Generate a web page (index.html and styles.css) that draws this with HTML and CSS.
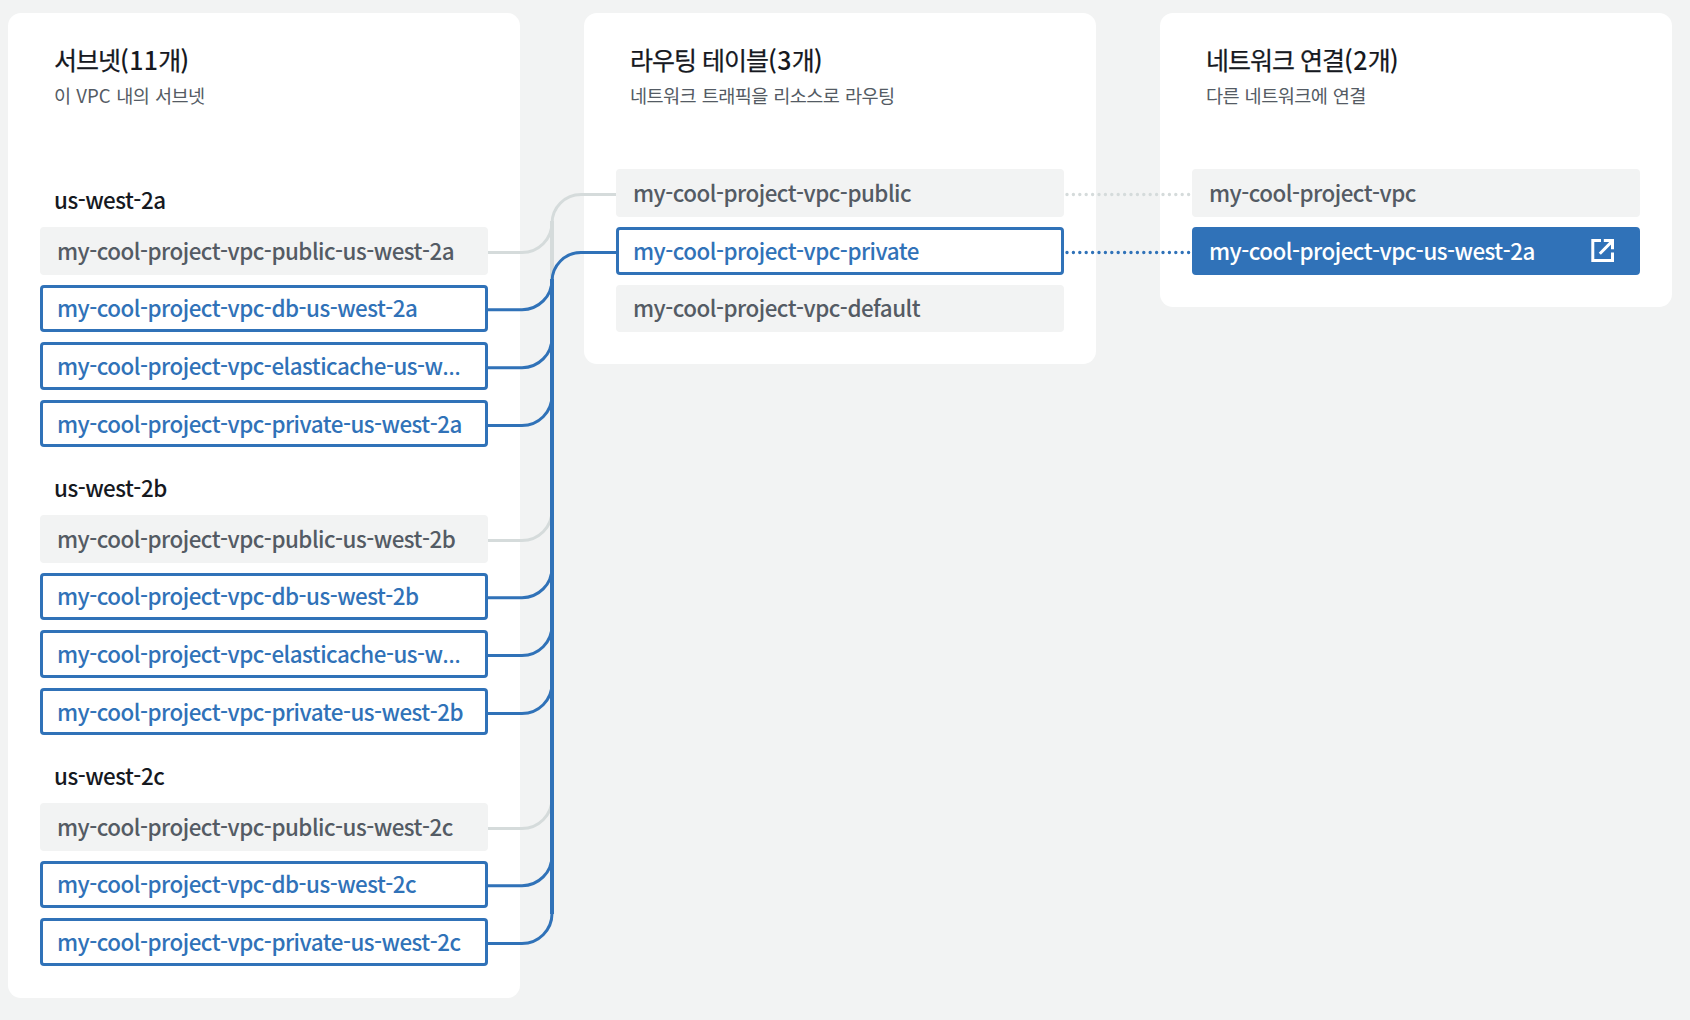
FILE: index.html
```html
<!DOCTYPE html>
<html lang="ko">
<head>
<meta charset="utf-8">
<title>VPC 리소스 맵</title>
<link rel="stylesheet" href="styles.css">
</head>
<body>
<main class="map">
  <section class="card">
    <header class="card-head">
      <h2 class="title">서브넷<span class="count">(11</span>개<span class="count">)</span></h2>
      <p class="subtitle">이 <span class="latin">VPC</span> 내의 서브넷</p>
    </header>
    <div class="groups">
      <div class="group">
        <h3 class="zone">us-west-2a</h3>
        <ul class="rows">
          <li class="row"><span class="name">my-cool-project-vpc-public-us-west-2a</span></li>
          <li class="row linked"><span class="name">my-cool-project-vpc-db-us-west-2a</span></li>
          <li class="row linked"><span class="name">my-cool-project-vpc-elasticache-us-w<span class="more">…</span></span></li>
          <li class="row linked"><span class="name">my-cool-project-vpc-private-us-west-2a</span></li>
        </ul>
      </div>
      <div class="group">
        <h3 class="zone">us-west-2b</h3>
        <ul class="rows">
          <li class="row"><span class="name">my-cool-project-vpc-public-us-west-2b</span></li>
          <li class="row linked"><span class="name">my-cool-project-vpc-db-us-west-2b</span></li>
          <li class="row linked"><span class="name">my-cool-project-vpc-elasticache-us-w<span class="more">…</span></span></li>
          <li class="row linked"><span class="name">my-cool-project-vpc-private-us-west-2b</span></li>
        </ul>
      </div>
      <div class="group">
        <h3 class="zone">us-west-2c</h3>
        <ul class="rows">
          <li class="row"><span class="name">my-cool-project-vpc-public-us-west-2c</span></li>
          <li class="row linked"><span class="name">my-cool-project-vpc-db-us-west-2c</span></li>
          <li class="row linked"><span class="name">my-cool-project-vpc-private-us-west-2c</span></li>
        </ul>
      </div>
    </div>
  </section>

  <section class="card">
    <header class="card-head">
      <h2 class="title">라우팅 테이블<span class="count">(3</span>개<span class="count">)</span></h2>
      <p class="subtitle">네트워크 트래픽을 리소스로 라우팅</p>
    </header>
    <ul class="rows">
      <li class="row"><span class="name">my-cool-project-vpc-public</span></li>
      <li class="row linked"><span class="name">my-cool-project-vpc-private</span></li>
      <li class="row"><span class="name">my-cool-project-vpc-default</span></li>
    </ul>
  </section>

  <section class="card">
    <header class="card-head">
      <h2 class="title">네트워크 연결<span class="count">(2</span>개<span class="count">)</span></h2>
      <p class="subtitle">다른 네트워크에 연결</p>
    </header>
    <ul class="rows">
      <li class="row"><span class="name">my-cool-project-vpc</span></li>
      <li class="row selected">
        <span class="name">my-cool-project-vpc-us-west-2a</span>
        <svg class="external" viewBox="0 0 25 25" aria-hidden="true">
          <path d="M11 2.6H2.8V22.4H22.5V14.4"/>
          <path d="M13.8 2.5H22.5V11.3M9.8 15.8L22 3.4"/>
        </svg>
      </li>
    </ul>
  </section>

  <svg class="links" viewBox="0 0 1690 1020" aria-hidden="true">
    <g class="muted">
      <path d="M488 252.5H522A30 30 0 0 0 552 222.5"/>
      <path d="M488 540.5H522A30 30 0 0 0 552 510.5"/>
      <path d="M488 828.5H522A30 30 0 0 0 552 798.5"/>
      <path d="M616 194.5H581A29 29 0 0 0 552 223.5"/>
      <path class="trunk" d="M552 221V800"/>
      <path class="dots" d="M1067 194.5H1189"/>
    </g>
    <g class="active">
      <path d="M488 309.7H522A30 30 0 0 0 552 279.7"/>
      <path d="M488 367.7H522A30 30 0 0 0 552 337.7"/>
      <path d="M488 425.5H522A30 30 0 0 0 552 395.5"/>
      <path d="M488 597.7H522A30 30 0 0 0 552 567.7"/>
      <path d="M488 655.5H522A30 30 0 0 0 552 625.5"/>
      <path d="M488 713.5H522A30 30 0 0 0 552 683.5"/>
      <path d="M488 885.7H522A30 30 0 0 0 552 855.7"/>
      <path d="M488 943.6H522A30 30 0 0 0 552 913.6"/>
      <path d="M616 252.5H581A29 29 0 0 0 552 281.5"/>
      <path class="trunk" d="M552 279V914"/>
      <path class="dots" d="M1067 252.5H1189"/>
    </g>
  </svg>
</main>
</body>
</html>
```

FILE: styles.css
```css
* {
  box-sizing: border-box;
}

body {
  margin: 0;
  background: #f2f3f3;
  font-family: "Noto Sans CJK KR", "Noto Sans", sans-serif;
  color: #16191f;
}

h2, h3, p, ul {
  margin: 0;
  padding: 0;
}

.map {
  position: relative;
  display: flex;
  align-items: flex-start;
  gap: 64px;
  height: 1020px;
  padding: 13px 18px 0 8px;
  overflow: hidden;
}

.card {
  flex: none;
  width: 512px;
  padding: 0 32px 32.2px;
  border-radius: 13px;
  background: #fff;
}

.card-head {
  height: 156.4px;
  padding: 28px 0 0 14px;
}

.title {
  font-size: 25px;
  font-weight: 400;
  line-height: 36px;
  letter-spacing: -1px;
  white-space: nowrap;
  -webkit-text-stroke: 0.25px currentColor;
}

.count {
  font-weight: 500;
  letter-spacing: 0.3px;
  -webkit-text-stroke: 0;
}

.subtitle {
  font-size: 18.6px;
  font-weight: 400;
  line-height: 28px;
  letter-spacing: -0.6px;
  word-spacing: 1px;
  color: #545b64;
  margin-top: 4px;
  white-space: nowrap;
}

.latin {
  letter-spacing: 0.1px;
}

.groups {
  display: flex;
  flex-direction: column;
  gap: 10px;
}

.zone {
  height: 57.6px;
  padding: 10px 0 0 14px;
  font-size: 22.4px;
  font-weight: 500;
  line-height: 40px;
  letter-spacing: -0.5px;
}

.rows {
  display: flex;
  flex-direction: column;
  gap: 10px;
  list-style: none;
}

.row {
  display: flex;
  align-items: center;
  justify-content: space-between;
  height: 47.6px;
  padding: 0 22px 0 14px;
  border: 3px solid #f2f3f3;
  border-radius: 4px;
  background: #f2f3f3;
  color: #545b64;
  font-size: 22.4px;
  font-weight: 500;
  line-height: 34px;
  letter-spacing: -0.51px;
  white-space: nowrap;
}

.name {
  padding-bottom: 2px;
}

.more {
  font-family: "Noto Sans", sans-serif;
  letter-spacing: 0;
  line-height: 1;
}

.row.linked {
  border-color: #3072b8;
  background: #fff;
  color: #3072b8;
}

.row.selected {
  border-color: #3072b8;
  background: #3072b8;
  color: #fff;
}

.external {
  width: 25px;
  height: 25px;
  fill: none;
  stroke: #fff;
  stroke-width: 3;
  stroke-linejoin: miter;
}

.links {
  position: absolute;
  top: 0;
  left: 0;
  width: 1690px;
  height: 1020px;
  fill: none;
  stroke-width: 3;
  pointer-events: none;
}

.muted {
  stroke: #d5dbdb;
}

.active {
  stroke: #3072b8;
}

.trunk {
  stroke-width: 4;
}

.dots {
  stroke-width: 3.4;
  stroke-linecap: round;
  stroke-dasharray: 0 6.4;
}
```
